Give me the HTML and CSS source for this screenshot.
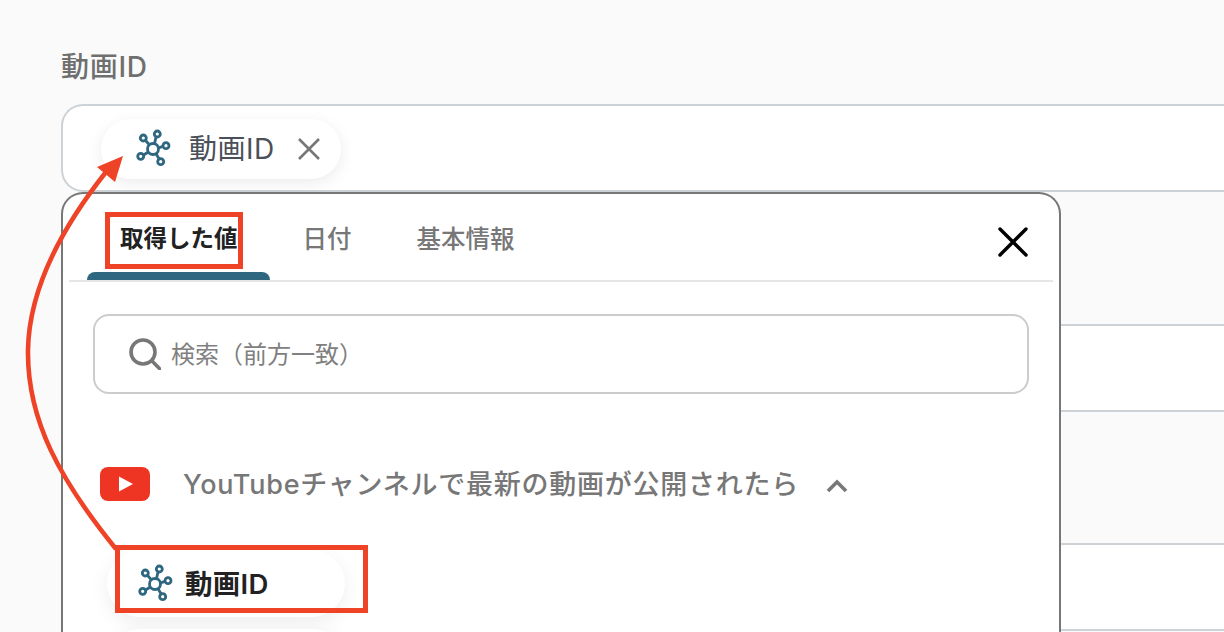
FILE: index.html
```html
<!DOCTYPE html>
<html lang="ja">
<head>
  <meta charset="UTF-8">
  <title>動画ID</title>
  <link rel="stylesheet" href="styles.css">
</head>
<body>
  <svg class="defs" width="0" height="0">
    <symbol id="node-icon" viewBox="0 0 40 40">
      <g fill="none" stroke="#2f6680" stroke-width="2.8">
        <circle cx="20" cy="20" r="5.5"/>
        <circle cx="10.3" cy="9" r="3"/>
        <circle cx="24.3" cy="5" r="3"/>
        <circle cx="33" cy="16.7" r="3"/>
        <circle cx="27.7" cy="32.7" r="3"/>
        <circle cx="7.7" cy="27.3" r="3"/>
        <path d="M12.3 11.3 16.4 15.8M23 8 21.5 14.6M30 17.4 25.4 18.8M26.2 30 23 24.8M10.5 26 15 23.2"/>
      </g>
    </symbol>
  </svg>

  <div class="page">
    <div class="field-label">動画ID</div>
    <div class="field">
      <div class="chip">
        <svg class="chip-icon"><use href="#node-icon"/></svg>
        <span class="chip-text">動画ID</span>
        <svg class="chip-close" viewBox="0 0 24 24"><path d="M2 2 22 22M22 2 2 22"/></svg>
      </div>
    </div>
    <div class="field"></div>
    <div class="field"></div>
  </div>

  <div class="modal">
    <div class="tabs">
      <div class="tab active">取得した値</div>
      <div class="tab">日付</div>
      <div class="tab">基本情報</div>
      <svg class="modal-close" viewBox="0 0 30 30"><path d="M2 2 28 28M28 2 2 28"/></svg>
    </div>
    <div class="modal-body">
      <div class="search">
        <svg class="search-icon" viewBox="0 0 32 32"><circle cx="14" cy="14" r="12"/><path d="M23 23 31 31"/></svg>
        <span class="search-text">検索（前方一致）</span>
      </div>
      <div class="group-head">
        <svg class="yt-icon" viewBox="0 0 50 34"><rect width="50" height="34" rx="8" fill="#ee3524"/><path d="M19 9.5 33 17 19 24.5Z" fill="#fff"/></svg>
        <span class="group-title">YouTubeチャンネルで最新の動画が公開されたら</span>
        <svg class="chevron" viewBox="0 0 22 14"><path d="M2 12 11 3 20 12"/></svg>
      </div>
      <div class="value-chip">
        <svg class="chip-icon"><use href="#node-icon"/></svg>
        <span class="value-text">動画ID</span>
      </div>
      <div class="value-chip next"></div>
    </div>
  </div>

  <!-- 注釈 -->
  <div class="mark mark-tab"></div>
  <div class="mark mark-chip"></div>
  <svg class="arrow" viewBox="0 0 1224 632">
    <path d="M116 549C60 480 27 420 28 350 29 290 60 230 106 172" fill="none" stroke="#ee4327" stroke-width="4.6"/>
    <path d="M123 156 97 167 115 182Z" fill="#ee4327"/>
  </svg>
</body>
</html>
```

FILE: styles.css
```css
html, body {
  margin: 0;
  height: 100%;
  overflow: hidden;
}
body {
  background-color: #fafafa;
  font-family: "Inter", "Noto Sans CJK JP", "Noto Sans", sans-serif;
  color: #6f6f6f;
}
.defs {
  position: absolute;
}
.page {
  box-sizing: border-box;
  height: 632px;
  overflow: hidden;
  padding: 48px 0 0 61px;
}
.field-label {
  font-size: 28px;
  font-weight: 500;
  letter-spacing: 0.7px;
  line-height: 38px;
  margin-bottom: 18px;
}
.field {
  box-sizing: border-box;
  height: 88px;
  margin-bottom: 131.5px;
  padding: 13px 0 0 38px;
  background: #fff;
  border: 2px solid #cdd2d6;
  border-right: none;
  border-radius: 22px 0 0 22px;
}
.field:last-child {
  margin-bottom: 0;
}
.chip {
  display: flex;
  align-items: center;
  width: 240px;
  height: 60px;
  box-sizing: border-box;
  padding-left: 32px;
  background: #fff;
  border-radius: 30px;
  box-shadow: 0 4px 16px rgba(0, 0, 0, 0.08);
}
.chip-icon {
  width: 40px;
  height: 40px;
  flex: none;
}
.chip-text {
  margin: -4px 0 0 16px;
  font-size: 28px;
  letter-spacing: 0.5px;
  color: #4a5058;
}
.chip-close {
  width: 24px;
  height: 24px;
  margin-left: 22px;
  fill: none;
  stroke: #777;
  stroke-width: 2.6;
}

.modal {
  position: absolute;
  left: 61px;
  top: 192px;
  box-sizing: border-box;
  width: 1000px;
  height: 440px;
  overflow: hidden;
  padding: 0 6px;
  background: #fff;
  border: 2px solid #777;
  border-bottom: none;
  border-radius: 22px 22px 0 0;
}
.tabs {
  display: flex;
  height: 86px;
  border-bottom: 2px solid #e6e6e6;
  position: relative;
}
.tab {
  font-size: 24.5px;
  font-weight: 500;
  line-height: 34px;
  padding-top: 28px;
  margin-right: 65px;
  color: #777;
}
.tab.active {
  font-size: 23.5px;
  font-weight: 700;
  color: #222;
  margin-left: 18px;
  margin-right: 33px;
  padding: 28px 32px 0 33px;
  position: relative;
}
.tab.active::after {
  content: "";
  position: absolute;
  left: 0;
  right: 0;
  bottom: 0;
  height: 8px;
  background: #2f6680;
  border-radius: 8px 8px 0 0;
}
.modal-close {
  position: absolute;
  left: 929px;
  top: 33px;
  width: 30px;
  height: 30px;
  fill: none;
  stroke: #000;
  stroke-width: 3.4;
  stroke-linecap: round;
}
.modal-body {
  padding: 32px 24px 0;
}
.search {
  display: flex;
  align-items: center;
  box-sizing: border-box;
  height: 80px;
  padding-left: 34px;
  border: 2px solid #ccc;
  border-radius: 16px;
  font-size: 24px;
  color: #808080;
}
.search-icon {
  width: 32px;
  height: 32px;
  margin-right: 10px;
  fill: none;
  stroke: #777;
  stroke-width: 3.6;
  stroke-linecap: round;
}
.search-text {
  margin-top: -3px;
}
.group-head {
  display: flex;
  align-items: center;
  height: 34px;
  margin-top: 73px;
  padding-left: 7px;
}
.yt-icon {
  width: 50px;
  height: 34px;
  flex: none;
}
.group-title {
  margin: -4px 0 0 33px;
  font-size: 27px;
  font-weight: 500;
  letter-spacing: 0.75px;
  color: #777;
  white-space: nowrap;
}
.chevron {
  width: 22px;
  height: 14px;
  margin-left: 27px;
  margin-top: 3px;
  fill: none;
  stroke: #777;
  stroke-width: 3.6;
}
.value-chip {
  display: flex;
  align-items: center;
  box-sizing: border-box;
  width: 238px;
  height: 67px;
  margin: 49px 0 12px 14px;
  padding-left: 28px;
  background: #fff;
  border-radius: 34px;
  box-shadow: 0 6px 20px rgba(0, 0, 0, 0.07);
  font-size: 27.5px;
  font-weight: 600;
  letter-spacing: 0.3px;
  color: #222;
}
.value-chip.next {
  margin-top: 0;
}
.value-text {
  margin: -4px 0 0 10px;
}

.mark {
  position: absolute;
  box-sizing: border-box;
  border: 5px solid #ee4327;
}
.mark-tab {
  left: 105px;
  top: 212px;
  width: 138px;
  height: 57px;
}
.mark-chip {
  left: 115px;
  top: 545px;
  width: 253px;
  height: 68px;
}
.arrow {
  position: absolute;
  left: 0;
  top: 0;
  width: 1224px;
  height: 632px;
  pointer-events: none;
}
```
